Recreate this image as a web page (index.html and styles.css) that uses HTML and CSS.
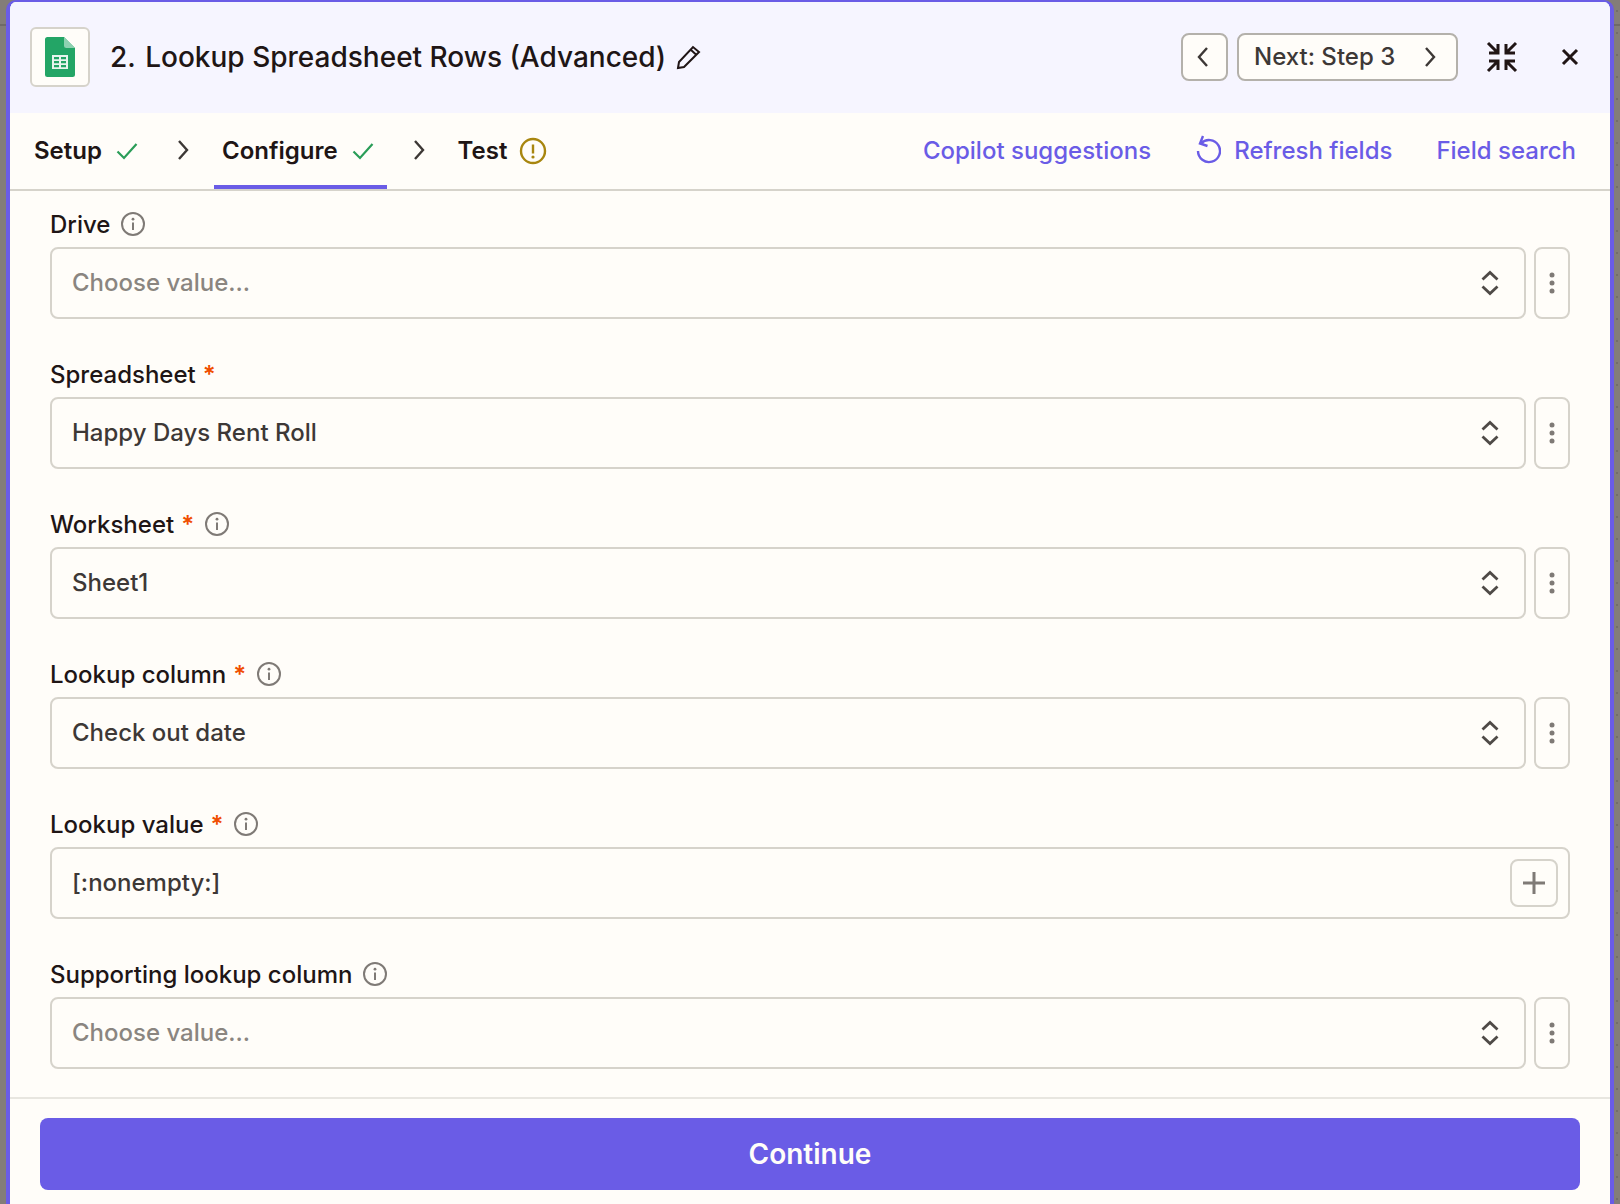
FILE: index.html
```html
<!DOCTYPE html>
<html lang="en">
<head>
<meta charset="utf-8">
<title>Lookup Spreadsheet Rows</title>
<link rel="stylesheet" href="styles.css">
</head>
<body>
<svg class="defs" width="0" height="0" aria-hidden="true">
  <defs>
    <symbol id="info" viewBox="0 0 26 26"><circle cx="13" cy="13" r="11" fill="none" stroke="currentColor" stroke-width="2"/><circle cx="13" cy="8.2" r="1.4" fill="currentColor"/><path d="M13 11.500v7.500" fill="none" stroke="currentColor" stroke-width="2"/></symbol>
    <symbol id="updown" viewBox="0 0 20 26"><path d="M2.500 9.500 10 2.500l7.500 7M2.500 16.500l7.500 7 7.500-7" fill="none" stroke="currentColor" stroke-width="2.800"/></symbol>
    <symbol id="dots" viewBox="0 0 6 24"><circle cx="3" cy="4" r="2.500" fill="currentColor"/><circle cx="3" cy="12" r="2.500" fill="currentColor"/><circle cx="3" cy="20" r="2.500" fill="currentColor"/></symbol>
    <symbol id="check" viewBox="0 0 22 18"><path d="M1.500 9.500 8 16 20.500 2" fill="none" stroke="currentColor" stroke-width="2.200"/></symbol>
    <symbol id="chev" viewBox="0 0 14 24"><path d="M3 3 11 12l-8 9" fill="none" stroke="currentColor" stroke-width="2.400"/></symbol>
    <symbol id="chevl" viewBox="0 0 14 24"><path d="M11 3 3 12l8 9" fill="none" stroke="currentColor" stroke-width="2.400"/></symbol>
  </defs>
</svg>
<main class="panel">
  <header class="head">
    <div class="appicon">
      <svg width="30" height="40" viewBox="0 0 30 40"><path d="M2.500 0H19l11 11v26.500a2.500 2.500 0 0 1-2.500 2.500h-25A2.500 2.500 0 0 1 0 37.500v-35A2.500 2.500 0 0 1 2.500 0z" fill="#23a566"/><path d="M19 0l11 11H21.500A2.500 2.500 0 0 1 19 8.500z" fill="#8ed1b1"/><path d="M7 18h16v14H7z" fill="#e8f5ee"/><path d="M9 20h5v2.300H9zM16 20h5v2.300h-5zM9 24h5v2.300H9zM16 24h5v2.300h-5zM9 28h5v2.300H9zM16 28h5v2.300h-5z" fill="#23a566"/></svg>
    </div>
    <h1 class="title"><span class="num">2.</span> Lookup Spreadsheet Rows (Advanced)</h1>
    <svg class="pencil" width="26" height="26" viewBox="0 0 26 26"><path d="M3 24l1-6L18 3l6 5L9 23zM15.500 5.500l6 5.500" fill="none" stroke="#201515" stroke-width="2"/></svg>
    <div class="headtools">
      <button class="navbtn prev" type="button"><svg width="14" height="24"><use href="#chevl"/></svg></button>
      <button class="navbtn next" type="button"><span>Next: Step 3</span><svg width="14" height="24"><use href="#chev"/></svg></button>
      <svg class="collapse" width="32" height="32" viewBox="0 0 32 32"><path d="M2 2l9 9M12 3v9H3M30 2l-9 9M20 3v9h9M2 30l9-9M12 29v-9H3M30 30l-9-9M20 29v-9h9" fill="none" stroke="#201515" stroke-width="3"/></svg>
      <svg class="close" width="18" height="18" viewBox="0 0 18 18"><path d="M2 2l14 14M16 2 2 16" fill="none" stroke="#201515" stroke-width="3"/></svg>
    </div>
  </header>
  <nav class="tabs">
    <div class="tab setup">Setup<svg class="ok" width="22" height="18"><use href="#check"/></svg></div>
    <svg class="sep" width="14" height="24"><use href="#chev"/></svg>
    <div class="tab active">Configure<svg class="ok" width="22" height="18"><use href="#check"/></svg></div>
    <svg class="sep" width="14" height="24"><use href="#chev"/></svg>
    <div class="tab test">Test<svg width="28" height="28" viewBox="0 0 28 28"><circle cx="14" cy="14" r="12" fill="none" stroke="#a8860f" stroke-width="2.400"/><path d="M14 7.500v9" stroke="#a8860f" stroke-width="2.400"/><circle cx="14" cy="20" r="1.600" fill="#a8860f"/></svg></div>
    <div class="links">
      <a class="link">Copilot suggestions</a>
      <a class="link refresh"><svg width="26" height="32" viewBox="0 0 26 32"><path d="M6 9.500a11 11 0 1 1-3 7.500M8 2 5 9.500l7.500 2.500" fill="none" stroke="#6a5ce6" stroke-width="2.400"/></svg>Refresh fields</a>
      <a class="link">Field search</a>
    </div>
  </nav>
  <section class="form">
    <div class="field">
      <div class="lab">Drive<svg class="i" width="26" height="26"><use href="#info"/></svg></div>
      <div class="row"><div class="box ph">Choose value...<svg class="ud" width="20" height="26"><use href="#updown"/></svg></div><div class="more"><svg width="6" height="24"><use href="#dots"/></svg></div></div>
    </div>
    <div class="field">
      <div class="lab">Spreadsheet<span class="req">*</span></div>
      <div class="row"><div class="box">Happy Days Rent Roll<svg class="ud" width="20" height="26"><use href="#updown"/></svg></div><div class="more"><svg width="6" height="24"><use href="#dots"/></svg></div></div>
    </div>
    <div class="field">
      <div class="lab">Worksheet<span class="req">*</span><svg class="i" width="26" height="26"><use href="#info"/></svg></div>
      <div class="row"><div class="box">Sheet1<svg class="ud" width="20" height="26"><use href="#updown"/></svg></div><div class="more"><svg width="6" height="24"><use href="#dots"/></svg></div></div>
    </div>
    <div class="field">
      <div class="lab">Lookup column<span class="req">*</span><svg class="i" width="26" height="26"><use href="#info"/></svg></div>
      <div class="row"><div class="box">Check out date<svg class="ud" width="20" height="26"><use href="#updown"/></svg></div><div class="more"><svg width="6" height="24"><use href="#dots"/></svg></div></div>
    </div>
    <div class="field">
      <div class="lab">Lookup value<span class="req">*</span><svg class="i" width="26" height="26"><use href="#info"/></svg></div>
      <div class="row"><div class="box wide">[:nonempty:]<div class="plus"><svg width="22" height="22" viewBox="0 0 22 22"><path d="M11 0v22M0 11h22" stroke="#7f7a76" stroke-width="3"/></svg></div></div></div>
    </div>
    <div class="field">
      <div class="lab">Supporting lookup column<svg class="i" width="26" height="26"><use href="#info"/></svg></div>
      <div class="row"><div class="box ph">Choose value...<svg class="ud" width="20" height="26"><use href="#updown"/></svg></div><div class="more"><svg width="6" height="24"><use href="#dots"/></svg></div></div>
    </div>
  </section>
  <footer class="foot"><button class="cta" type="button">Continue</button></footer>
</main>
</body>
</html>
```
FILE: styles.css
```css
* { box-sizing: border-box; }
html, body { margin: 0; height: 100%; }
body {
  width: 1620px;
  height: 1204px;
  overflow: hidden;
  background-color: #837d78;
  background-image:
    linear-gradient(#6f6a66, #6f6a66),
    radial-gradient(circle, #726d69 1px, transparent 1.5px);
  background-size: 100% 2px, 22px 22px;
  background-position: 0 24px, 0 0;
  background-repeat: no-repeat, repeat;
  font-family: Inter, "Liberation Sans", sans-serif;
  color: #201515;
  padding: 0 6px;
}
.defs { position: absolute; }
.panel {
  height: 1204px;
  display: flex;
  flex-direction: column;
  background: #fffdf9;
  border: solid #6a5ce6;
  border-width: 2px 4px 0;
  border-radius: 10px 10px 0 0;
  overflow: hidden;
}
.head {
  flex: 0 0 111px;
  display: flex;
  align-items: center;
  padding: 0 0 2px 20px;
  background: #f6f5ff;
}
.appicon {
  width: 60px;
  height: 60px;
  display: flex;
  align-items: center;
  justify-content: center;
  background: #fffdf9;
  border: 2px solid #d6d3cb;
  border-radius: 6px;
}
.title { margin: 0 0 0 20px; font-size: 28px; font-weight: 500; line-height: 36px; }
.num { margin-right: 2px; }
.pencil { margin-left: 9px; }
.headtools { margin-left: auto; display: flex; align-items: center; }
.navbtn {
  height: 48px;
  display: flex;
  align-items: center;
  background: #fffdf9;
  border: 2px solid #b4b1ab;
  border-radius: 8px;
  color: #3d3836;
  font: 500 24px Inter, sans-serif;
  padding: 0;
}
.prev { width: 47px; justify-content: center; padding-right: 4px; }
.next { width: 221px; margin-left: 9px; padding: 0 19px 0 15px; justify-content: space-between; }
.collapse { margin-left: 28px; }
.close { margin-left: 43px; margin-right: 31px; }
.tabs {
  flex: 0 0 78px;
  display: flex;
  align-items: stretch;
  padding-left: 24px;
  border-bottom: 2px solid #d6d3cb;
  font-size: 24px;
}
.tab {
  display: flex;
  align-items: center;
  font-weight: 600;
  padding-top: 3px;
  border-bottom: 4px solid transparent;
}
.ok { color: #2a9d58; margin-left: 14px; }
.sep { align-self: center; color: #3d3836; margin-top: -2px; }
.setup { padding-right: 38px; }
.setup + .sep { margin-right: 24px; }
.active { padding: 3px 13px 0 8px; border-bottom-color: #6a5ce6; }
.active + .sep { margin: -2px 32px 0 25px; }
.test svg { margin-left: 12px; }
.links { margin-left: auto; display: flex; align-items: center; color: #6a5ce6; font-weight: 500; padding: 0 34px 2px 0; }
.link { display: flex; align-items: center; }
.refresh { margin-left: 44px; }
.refresh svg { margin-right: 13px; }
.refresh + .link { margin-left: 44px; }
.form { flex: 1; min-height: 0; padding: 20px 40px 0 40px; display: flex; flex-direction: column; }
.field { flex: 0 0 150px; }
.lab {
  height: 36px;
  padding-bottom: 10px;
  display: flex;
  align-items: center;
  font-size: 24px;
  font-weight: 500;
}
.req { color: #f04e00; margin-left: 7px; font-weight: 600; }
.i { color: #7f7a76; margin-left: 10px; }
.row { display: flex; gap: 8px; }
.box {
  flex: 1;
  height: 72px;
  display: flex;
  align-items: center;
  justify-content: space-between;
  border: 2px solid #d6d3cb;
  border-radius: 8px;
  padding: 0 24px 2px 20px;
  font-size: 24px;
  font-weight: 500;
  color: #3d3836;
}
.ph { color: #8a8580; }
.ud { color: #4f4a47; margin-top: 2px; }
.more {
  flex: 0 0 36px;
  height: 72px;
  display: flex;
  align-items: center;
  justify-content: center;
  border: 2px solid #d6d3cb;
  border-radius: 8px;
  color: #7f7a76;
}
.wide { padding-right: 10px; }
.plus {
  width: 48px;
  height: 48px;
  margin-top: 2px;
  display: flex;
  align-items: center;
  justify-content: center;
  border: 2px solid #d6d3cb;
  border-radius: 8px;
}
.foot {
  flex: 0 0 107px;
  border-top: 2px solid #e8e6e0;
  padding: 19px 30px 0;
}
.cta {
  width: 100%;
  height: 72px;
  background: #6a5ce6;
  color: #fffdf9;
  border: 0;
  border-radius: 8px;
  font: 600 28px Inter, sans-serif;
}
```
